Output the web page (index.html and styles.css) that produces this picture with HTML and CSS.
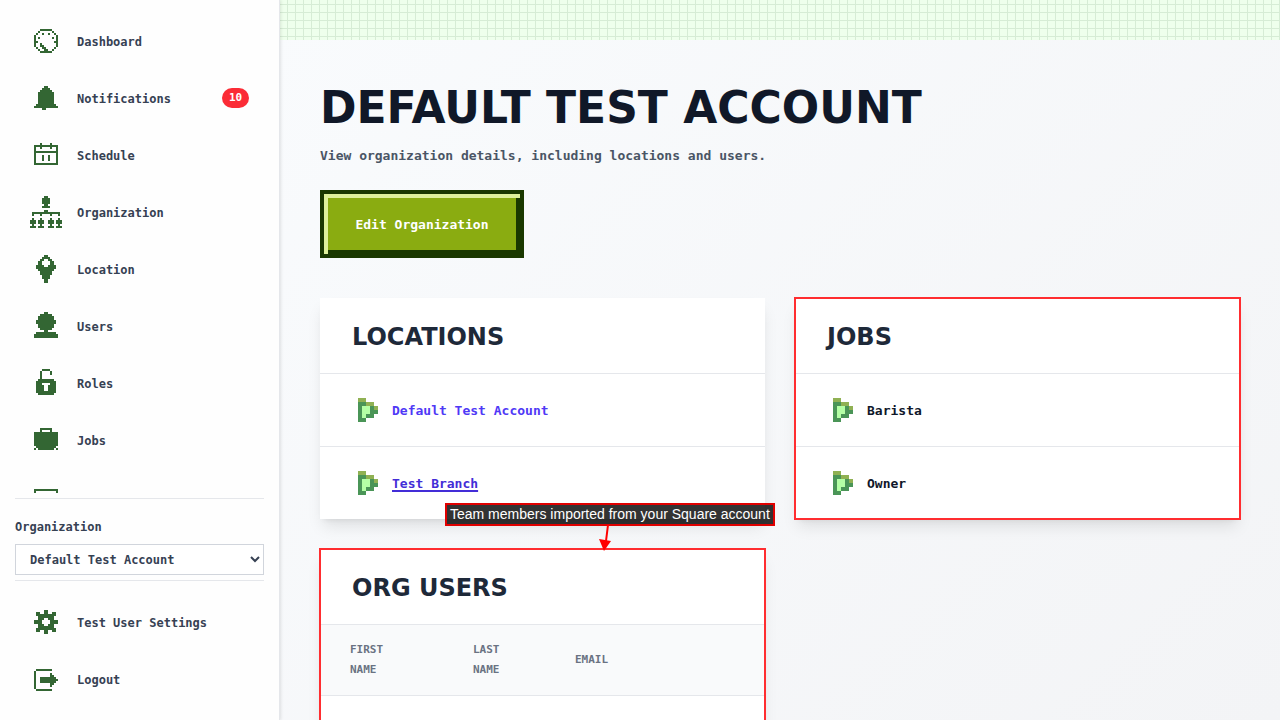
FILE: index.html
```html
<!DOCTYPE html>
<html lang="en">
<head>
    <meta charset="UTF-8">
    <meta name="viewport" content="width=device-width, initial-scale=1">
    <title>Default Test Account</title>
    <link rel="stylesheet" href="styles.css">
</head>
<body>
    <!-- shared pixel icon -->
    <svg class="defs" aria-hidden="true">
        <symbol id="leaf" viewBox="0 0 5 6">
            <path fill="#90b153" d="M0 0h2v1h-2zM2 1h2v1h-2zM4 2h1v1h-1z"/>
            <path fill="#4a9557" d="M0 1h2v1h2v1h1v1h-1v1h-2v1h-2z"/>
            <path fill="#b4ffa5" d="M1 2h2v2h-1v1h-1z"/>
        </symbol>
    </svg>

    <aside class="sidebar">
        <nav class="menu">
            <a href="#" class="item">
                <svg class="icon" viewBox="0 0 16 16"><path d="M5 2h6v1h-6zM4 3h1v1h-1zM11 3h1v1h-1zM3 4h1v1h-1zM6 4h1v1h-1zM9 4h1v1h-1zM12 4h1v1h-1zM2 5h1v6h-1zM13 5h1v6h-1zM4 6h1v1h-1zM11 6h1v1h-1zM3 8h1v1h-1zM12 8h1v1h-1zM5 9h1v1h1v1h1v1h1v1h2v1h-6v-1h2v-1h-1v-1h-1zM3 11h1v1h-1zM12 11h1v1h-1zM4 12h1v1h-1zM11 12h1v1h-1z"/></svg>
                <span class="text">Dashboard</span>
            </a>
            <a href="#" class="item">
                <svg class="icon" viewBox="0 0 16 16"><path d="M7 2h2v1h1v1h1v1h1v6h1v1h1v1h-6v1h-2v-1h-4v-1h1v-1h1v-6h1v-1h1v-1h1z"/></svg>
                <span class="text">Notifications</span>
                <span class="badge">10</span>
            </a>
            <a href="#" class="item">
                <svg class="icon" viewBox="0 0 16 16"><path d="M5 2h1v3h-1zM10 2h1v3h-1zM2 3h12v1h-12zM2 6h12v1h-12zM2 12h12v1h-12zM2 4h1v8h-1zM13 4h1v8h-1zM6 8h1v3h-1zM9 8h1v3h-1z"/></svg>
                <span class="text">Schedule</span>
            </a>
            <a href="#" class="item">
                <svg class="icon" viewBox="0 0 16 16"><path d="M7 0h2v1h1v3h-1v1h1v1h-4v-1h1v-1h-1v-3h1zM7 7h2v1h6v2h-1v-1h-3v1h-1v-1h-4v1h-1v-1h-3v1h-1v-2h6zM1 11h1v1h1v2h-1v1h1v1h-3v-1h1v-1h-1v-2h1zM5 11h1v1h1v2h-1v1h1v1h-3v-1h1v-1h-1v-2h1zM10 11h1v1h1v2h-1v1h1v1h-3v-1h1v-1h-1v-2h1zM14 11h1v1h1v2h-1v1h1v1h-3v-1h1v-1h-1v-2h1z"/></svg>
                <span class="text">Organization</span>
            </a>
            <a href="#" class="item">
                <svg class="icon" viewBox="0 0 16 16"><path fill-rule="evenodd" d="M7 1h2v1h1v1h1v1h1v2h1v2h-1v1h-1v2h-1v2h-1v2h-2v-2h-1v-2h-1v-2h-1v-1h-1v-2h1v-2h1v-1h1v-1h1zM7 3v1h-1v2h1v1h2v-1h1v-2h-1v-1z"/></svg>
                <span class="text">Location</span>
            </a>
            <a href="#" class="item">
                <svg class="icon" viewBox="0 0 16 16"><path d="M7 1h2v1h2v1h1v2h1v2h-1v2h-1v1h-2v1h4v1h1v2h-12v-2h1v-1h4v-1h-2v-1h-1v-2h-1v-2h1v-2h1v-1h2z"/></svg>
                <span class="text">Users</span>
            </a>
            <a href="#" class="item">
                <svg class="icon" viewBox="0 0 16 16"><path fill-rule="evenodd" d="M6 1h4v1h-4zM5 2h1v4h-1zM10 2h1v2h-1zM4 6h8v1h1v6h-1v1h-8v-1h-1v-6h1zM6 8v1h1v3h2v-3h1v-1z"/></svg>
                <span class="text">Roles</span>
            </a>
            <a href="#" class="item">
                <svg class="icon" viewBox="0 0 16 16"><path d="M5 2h6v2h-1v-1h-4v1h-1zM2 4h12v7h-1v1h-1v1h-8v-1h-1v-1h-1zM2 12h1v1h-1zM13 12h1v1h-1z"/></svg>
                <span class="text">Jobs</span>
            </a>
            <a href="#" class="item" aria-label="More">
                <svg class="icon" viewBox="0 0 16 16"><path d="M2 4h12v9h-12zM3 5v7h10v-7z" fill-rule="evenodd"/></svg>
            </a>
        </nav>

        <div class="org">
            <label for="org">Organization</label>
            <select id="org">
                <option>Default Test Account</option>
            </select>
        </div>

        <nav class="menu menu-bottom">
            <a href="#" class="item">
                <svg class="icon" viewBox="0 0 16 16"><path fill-rule="evenodd" d="M7 2h2v2h2v-1h2v2h-1v2h2v2h-2v2h1v2h-2v-1h-2v2h-2v-2h-2v1h-2v-2h1v-2h-2v-2h2v-2h-1v-2h2v1h2zM7 6v1h-1v2h1v1h2v-1h1v-2h-1v-1z"/></svg>
                <span class="text">Test User Settings</span>
            </a>
            <a href="#" class="item">
                <svg class="icon" viewBox="0 0 16 16"><path d="M3 3h8v1h-8zM2 4h1v9h-1zM3 13h8v1h-8zM10 5h1v1h1v1h1v1h1v1h-1v1h-1v1h-1v1h-1v-2h-5v-3h5z"/></svg>
                <span class="text">Logout</span>
            </a>
        </nav>
    </aside>

    <main>
        <div class="band"></div>
        <div class="content">
            <h1>DEFAULT TEST ACCOUNT</h1>
            <p class="intro">View organization details, including locations and users.</p>
            <button type="button" class="edit">Edit Organization</button>

            <div class="cards">
                <section class="card">
                    <h2>LOCATIONS</h2>
                    <ul>
                        <li><svg class="leaf"><use href="#leaf"/></svg><a href="#">Default Test Account</a></li>
                        <li><svg class="leaf"><use href="#leaf"/></svg><a href="#" class="active">Test Branch</a></li>
                    </ul>
                </section>

                <section class="card marked">
                    <h2>JOBS</h2>
                    <ul>
                        <li><svg class="leaf"><use href="#leaf"/></svg>Barista</li>
                        <li><svg class="leaf"><use href="#leaf"/></svg>Owner</li>
                    </ul>
                </section>

                <section class="card marked users">
                    <h2>ORG USERS</h2>
                    <table>
                        <thead>
                            <tr>
                                <th class="first">FIRST NAME</th>
                                <th class="last">LAST NAME</th>
                                <th>EMAIL</th>
                            </tr>
                        </thead>
                        <tbody>
                            <tr><td></td><td></td><td></td></tr>
                        </tbody>
                    </table>
                    <div class="note">
                        Team members imported from your Square account
                        <svg class="arrow" viewBox="0 0 14 26"><path d="M9 0L7 16" stroke="#f00" stroke-width="2"/><path d="M0 14L12 16L5 26z" fill="#f00"/></svg>
                    </div>
                </section>
            </div>
        </div>
    </main>
</body>
</html>
```

FILE: styles.css
```css
* {
    box-sizing: border-box;
}
body {
    margin: 0;
    display: flex;
    height: 100vh;
    overflow: hidden;
    font-family: "DejaVu Sans Mono", monospace;
    font-weight: bold;
    font-size: 13px;
    color: #0f172a;
    background: #fff;
}
.defs {
    position: absolute;
    width: 0;
    height: 0;
}

/* sidebar */
.sidebar {
    flex: 0 0 280px;
    display: flex;
    flex-direction: column;
    padding: 12px 15px 13px;
    background: #fefefe;
    border-right: 1px solid #e5e7eb;
    box-shadow: 1px 0 3px rgba(0, 0, 0, 0.1);
    z-index: 1;
    font-size: 12px;
    color: #364153;
}
.menu {
    flex: 1;
    min-height: 0;
    overflow: hidden;
}
.menu-bottom {
    flex: none;
    padding-top: 12px;
    border-top: 1px solid #e5e7eb;
}
.item {
    display: flex;
    align-items: center;
    gap: 15px;
    height: 57px;
    padding: 0 15px;
    color: inherit;
    text-decoration: none;
}
.icon {
    width: 32px;
    height: 32px;
    fill: #336633;
    shape-rendering: crispEdges;
}
.text {
    padding-top: 2px;
}
.badge {
    margin-left: auto;
    padding: 0 6px;
    min-width: 27px;
    line-height: 20px;
    text-align: center;
    font-size: 11px;
    color: #fff;
    background: #fb2c36;
    border-radius: 10px;
}
.org {
    margin-top: 5px;
    padding: 18px 0 5px;
    border-top: 1px solid #e5e7eb;
}
.org label {
    display: block;
    line-height: 20px;
    margin-bottom: 7px;
}
.org select {
    display: block;
    width: 100%;
    height: 31px;
    padding: 0 0 0 10px;
    font: inherit;
    color: inherit;
    background: #fff;
    border: 1px solid #d1d5dc;
    border-radius: 0;
}

/* main area */
main {
    flex: 1;
    min-width: 0;
    overflow: hidden;
    background: linear-gradient(135deg, #f9fbfd, #f3f4f6);
}
.band {
    height: 40px;
    background-color: #eeffec;
    background-image:
        linear-gradient(to right, transparent 7px, #d6ecd5 7px),
        linear-gradient(to bottom, transparent 7px, #d6ecd5 7px);
    background-size: 8px 8px;
    background-position: 0 5px;
}
.content {
    padding: 38px 40px;
}
h1 {
    margin: 0;
    font: bold 44px/60px "DejaVu Sans", sans-serif;
    color: #101828;
}
.intro {
    margin: 8px 0 24px;
    line-height: 20px;
    color: #4a5565;
}
.edit {
    display: block;
    min-width: 204px;
    height: 68px;
    padding: 0 30px;
    font: inherit;
    color: #fff;
    background: #8aac11;
    border: 4px solid #1a3800;
    box-shadow: inset 4px 4px 0 #def09b, inset -4px -4px 0 #1a3800;
    cursor: pointer;
}
.cards {
    display: grid;
    grid-template-columns: 1fr 1fr;
    gap: 30px;
    margin-top: 40px;
}
.card {
    background: #fff;
    box-shadow: 0 10px 15px -3px rgba(0, 0, 0, 0.1), 0 4px 6px -4px rgba(0, 0, 0, 0.1);
}
.marked {
    outline: 2px solid #ff2d30;
    outline-offset: -1px;
}
.card h2 {
    margin: 0;
    padding: 24px 32px 21px;
    font: bold 24px/30px "DejaVu Sans", sans-serif;
    color: #1e2939;
    border-bottom: 1px solid #e5e7eb;
}
.card ul {
    margin: 0;
    padding: 0;
    list-style: none;
}
.card li {
    display: flex;
    align-items: center;
    gap: 14px;
    height: 73px;
    padding: 0 38px;
    border-bottom: 1px solid #e5e7eb;
}
.card li:last-child {
    height: 72px;
    border-bottom: 0;
}
.card li a {
    color: #4f39f6;
    text-decoration: none;
}
.card li a.active {
    color: #432dd7;
    text-decoration: underline;
    text-decoration-thickness: 2px;
    text-underline-offset: 2px;
}
.leaf {
    width: 20px;
    height: 24px;
    shape-rendering: crispEdges;
}

/* users table */
.users {
    position: relative;
}
table {
    width: 100%;
    table-layout: fixed;
    border-collapse: collapse;
}
th {
    padding: 15px 30px;
    font-size: 11px;
    line-height: 20px;
    text-align: left;
    color: #6a7282;
    background: #f9fafb;
    border-bottom: 1px solid #e5e7eb;
}
.first {
    width: 123px;
}
.last {
    width: 102px;
}
td {
    height: 72px;
}
.note {
    position: absolute;
    top: -46px;
    left: 125px;
    padding: 0 3px;
    border: 2px solid #e00000;
    background: rgba(0, 0, 0, 0.8);
    color: #fff;
    font: 14px/19px "Liberation Sans", Arial, sans-serif;
    white-space: nowrap;
}
.arrow {
    position: absolute;
    top: 20px;
    left: 152px;
    width: 14px;
    height: 26px;
}
```
